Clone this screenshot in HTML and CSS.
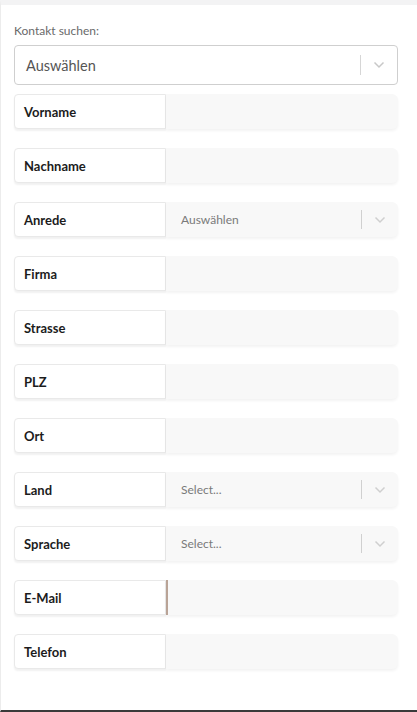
FILE: index.html
```html
<!DOCTYPE html>
<html lang="de">
<head>
<meta charset="utf-8">
<link rel="stylesheet" href="styles.css">
</head>
<body>
<div class="page">
  <div class="search">
    <div class="search-label">Kontakt suchen:</div>
    <div class="select-big">
      <span class="select-big-text">Auswählen</span>
      <span class="sep"></span>
      <svg class="chev" width="12" height="8" viewBox="0 0 12 8"><path d="M1.5 1.5 L6 6 L10.5 1.5" fill="none" stroke="#c8c8c8" stroke-width="1.5"/></svg>
    </div>
  </div>
  <div class="rows">
    <div class="row"><div class="lbl">Vorname</div><div class="field"></div></div>
    <div class="row"><div class="lbl">Nachname</div><div class="field"></div></div>
    <div class="row"><div class="lbl">Anrede</div><div class="field sel"><span class="ph">Auswählen</span><span class="sep small"></span><svg class="chev" width="12" height="8" viewBox="0 0 12 8"><path d="M1.5 1.5 L6 6 L10.5 1.5" fill="none" stroke="#cfcfcf" stroke-width="1.5"/></svg></div></div>
    <div class="row"><div class="lbl">Firma</div><div class="field"></div></div>
    <div class="row"><div class="lbl">Strasse</div><div class="field"></div></div>
    <div class="row"><div class="lbl">PLZ</div><div class="field"></div></div>
    <div class="row"><div class="lbl">Ort</div><div class="field"></div></div>
    <div class="row"><div class="lbl">Land</div><div class="field sel"><span class="ph">Select...</span><span class="sep small"></span><svg class="chev" width="12" height="8" viewBox="0 0 12 8"><path d="M1.5 1.5 L6 6 L10.5 1.5" fill="none" stroke="#cfcfcf" stroke-width="1.5"/></svg></div></div>
    <div class="row"><div class="lbl">Sprache</div><div class="field sel"><span class="ph">Select...</span><span class="sep small"></span><svg class="chev" width="12" height="8" viewBox="0 0 12 8"><path d="M1.5 1.5 L6 6 L10.5 1.5" fill="none" stroke="#cfcfcf" stroke-width="1.5"/></svg></div></div>
    <div class="row"><div class="lbl">E-Mail</div><div class="field focus"></div></div>
    <div class="row"><div class="lbl">Telefon</div><div class="field"></div></div>
  </div>
</div>
</body>
</html>
```
FILE: styles.css
```css
* { box-sizing: border-box; }
html, body { margin: 0; padding: 0; background: #ffffff; }
body { font-family: Lato, "Open Sans", sans-serif; width: 417px; height: 712px; overflow: hidden; }
.page {
  height: 712px;
  border-top: 5px solid #f3f3f4;
  border-left: 1px solid #ececec;
  border-bottom: 2px solid #3a3a3a;
  padding: 19px 19px 0 13px;
}
.search-label {
  font-size: 12px;
  line-height: 14px;
  color: #6a6a6a;
  margin-bottom: 7px;
}
.select-big {
  height: 40px;
  border: 1px solid #cfcfcf;
  border-radius: 4px;
  display: flex;
  align-items: center;
  padding: 0 12px 0 11px;
}
.select-big-text { font-size: 14.5px; color: #555; flex: 1; }
.sep { width: 1px; height: 20px; background: #d6d6d6; margin-right: 12px; }
.chev { display: block; }
.rows { display: flex; flex-direction: column; gap: 19px; margin-top: 9px; }
.row { display: flex; height: 35px; }
.lbl {
  width: 152px;
  background: #fff;
  border: 1px solid #e9e9e9;
  border-radius: 4px 0 0 4px;
  box-shadow: 0 2px 2px rgba(0,0,0,0.06);
  font-weight: 700;
  font-size: 13px;
  color: #1c1c1c;
  display: flex;
  align-items: center;
  padding-left: 9px;
}
.field {
  flex: 1;
  background: #f8f8f8;
  border-radius: 0 6px 6px 0;
  box-shadow: 0 2px 3px rgba(0,0,0,0.05);
}
.field.sel { display: flex; align-items: center; padding: 0 12px 0 15px; }
.ph { flex: 1; font-size: 12px; color: #7a7a7a; }
.sep.small { height: 19px; margin-right: 12px; background: #d0d0d0; }
.field.focus { border-left: 2px solid #b9a396; }
```
